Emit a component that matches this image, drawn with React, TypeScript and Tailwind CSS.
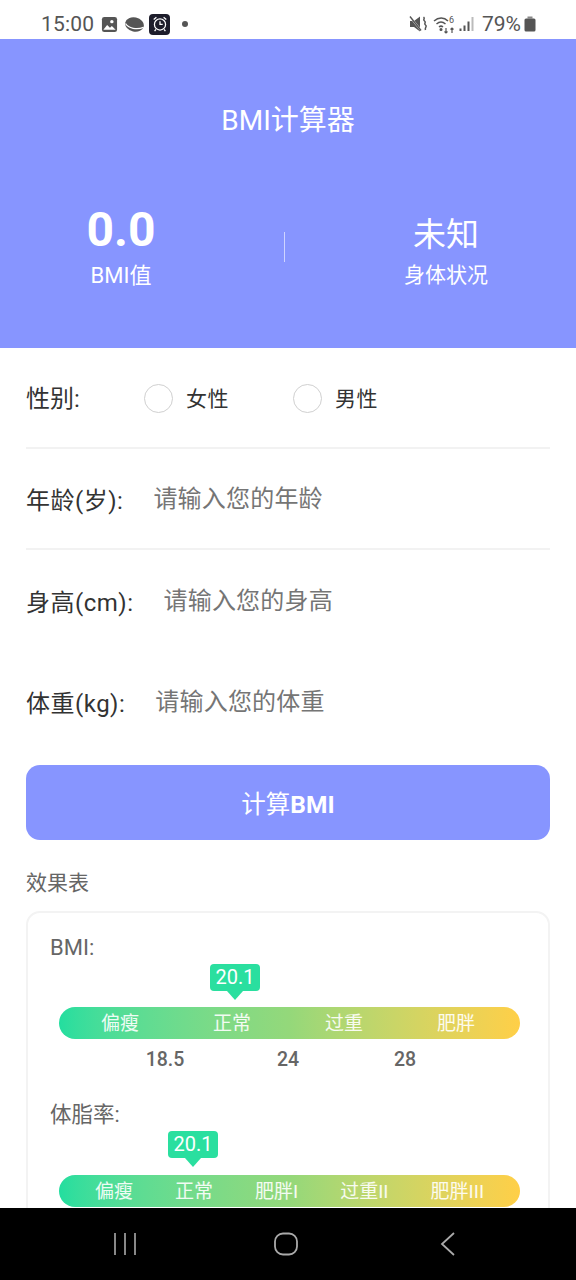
import React from 'react';

const FONT = 'font-["Roboto","Noto_Sans_CJK_SC",sans-serif]';

const StatusBar: React.FC = () => (
  <div className="h-[39px] shrink-0 bg-white flex items-center justify-between pt-[9px] pl-[41px] pr-[40px] text-[#555]">
    <div className="flex items-center">
      <span className="text-[21px] leading-none tracking-[0.2px]">15:00</span>
      <svg viewBox="0 0 18 18" className="w-[17px] h-[17px] ml-[7px]">
        <rect x="1" y="1" width="16" height="16" rx="2.5" fill="#555" />
        <circle cx="11.500" cy="6" r="1.8" fill="#fff" />
        <path d="M2.500 14.500l4-5 3 3 2-2 4 4z" fill="#fff" />
      </svg>
      <svg viewBox="0 0 22 18" className="w-[21px] h-[17px] ml-[6px]">
        <ellipse cx="11" cy="9" rx="10" ry="7.500" fill="#555" transform="rotate(12 11 9)" />
        <path d="M1.500 8c3 5 12 7 19 4" stroke="#fff" strokeWidth="1.300" fill="none" />
      </svg>
      <div className="w-[21px] h-[21px] ml-[4px] rounded-[4px] bg-[#1d1d2b] flex items-center justify-center">
        <svg viewBox="0 0 20 20" className="w-[18px] h-[18px]" fill="none" stroke="#fff" strokeWidth="1.400">
          <circle cx="10" cy="10.500" r="6.200" />
          <path d="M10 7v3.500h3M3 5l3-2.500M17 5l-3-2.500M5.500 16L4 18M14.500 16l1.500 2" />
        </svg>
      </div>
      <div className="w-[6px] h-[6px] rounded-full bg-[#555] ml-[12px]" />
    </div>
    <div className="flex items-center">
      <svg viewBox="0 0 18 18" className="w-[18px] h-[18px]" fill="#555">
        <path d="M1 6h4L11 1.500v15L5 12H1z" />
        <path d="M0.500 1l12 15" stroke="#fff" strokeWidth="2" />
        <path d="M1 1.500l11 14" stroke="#555" strokeWidth="1.400" />
        <path d="M14.500 2c2 1.500-1 2.500 1 4s-1 2.500 1 4-1 2.500 0 5" stroke="#555" strokeWidth="1.500" fill="none" />
      </svg>
      <svg viewBox="0 0 24 20" className="w-[24px] h-[20px] ml-[6px]" fill="none" stroke="#555" strokeWidth="1.500">
        <path d="M1 7c4.500-4 10-4 14 0M3.500 10c3-2.600 6-2.600 9 0M6 13c1.500-1.300 2.500-1.300 4 0" />
        <circle cx="8" cy="15.500" r="0.800" fill="#555" />
        <path d="M13 14v5M11.500 17.500l1.500 1.500 1.500-1.500M19 19v-5M17.500 15.500l1.500-1.500 1.500 1.500" strokeWidth="1.200" />
        <text x="16" y="9" fontSize="9" fill="#555" stroke="none">6</text>
      </svg>
      <svg viewBox="0 0 16 16" className="w-[16px] h-[16px] ml-[2px]" fill="#555">
        <rect x="0.500" y="12.500" width="2" height="2.500" />
        <rect x="4.500" y="9.500" width="2" height="5.500" />
        <rect x="8.500" y="5.500" width="2" height="9.500" />
        <rect x="12.500" y="1" width="2" height="14" fill="#bbb" />
      </svg>
      <span className="text-[21px] leading-none ml-[7px]">79%</span>
      <svg viewBox="0 0 12 16" className="w-[12px] h-[16px] ml-[3px]" fill="#555">
        <rect x="3.500" y="0.500" width="5" height="2" fill="#888" />
        <rect x="0.500" y="2.500" width="11" height="13" rx="1.500" />
      </svg>
    </div>
  </div>
);

const Row: React.FC<{ label: string; placeholder: string; border?: boolean }> = ({ label, placeholder, border }) => (
  <div className={`h-[101px] flex items-center ${border ? 'border-b-2 border-[#f2f2f2]' : ''}`}>
    <span className="text-[24px] text-[#333] mt-[5px] tracking-[0.5px]">{label}</span>
    <span className="text-[24px] text-[#757575] tracking-[0.2px] ml-[30px]">{placeholder}</span>
  </div>
);

const Radio: React.FC<{ label: string }> = ({ label }) => (
  <div className="flex items-center">
    <div className="w-[29px] h-[29px] rounded-full border border-[#d0d0d0]" />
    <span className="ml-[13px] text-[21px] text-[#333] tracking-[0.5px] mt-[2px]">{label}</span>
  </div>
);

const Marker: React.FC<{ ml: string }> = ({ ml }) => (
  <div className={`w-[50px] flex flex-col items-center ${ml}`}>
    <div className="w-[50px] h-[27px] rounded-[4px] bg-[#2adf9f] text-white text-[20px] leading-[27px] text-center">20.1</div>
    <div className="w-0 h-0 border-x-[8px] border-x-transparent border-t-[9px] border-t-[#2adf9f]" />
  </div>
);

const Bar: React.FC<{ labels: string[]; cls: string }> = ({ labels, cls }) => (
  <div className={`ml-[9px] w-[461px] h-[32px] shrink-0 rounded-full bg-gradient-to-r from-[#22de9f] via-[#94d87a] via-50% to-[#ffcf47] flex items-center text-white/90 text-[19px] ${cls}`}>
    {labels.map((l) => (
      <span key={l} className="mt-[2px]">{l}</span>
    ))}
  </div>
);

export default function App() {
  return (
    <div className={`w-[576px] h-[1280px] flex flex-col overflow-hidden bg-white ${FONT}`}>
      <StatusBar />
      <div className="flex-1 min-h-0 overflow-hidden">
        <div className="h-[309px] bg-[#8795ff] flex flex-col items-center">
          <div className="mt-[62px] text-[28px] leading-[40px] text-white">BMI计算器</div>
          <div className="mt-[61px] w-full flex items-center text-white">
            <div className="w-[242px] flex flex-col items-center">
              <div className="text-[48px] leading-[56px] font-bold">0.0</div>
              <div className="text-[22px] leading-[30px] mt-[3px]">BMI值</div>
            </div>
            <div className="ml-[42px] w-px h-[30px] bg-white/60" />
            <div className="ml-[41px] w-[240px] flex flex-col items-center">
              <div className="text-[33px] leading-[56px] mt-[2px]">未知</div>
              <div className="text-[21px] leading-[28px] -mt-[2px]">身体状况</div>
            </div>
          </div>
        </div>

        <div className="px-[26px]">
          <div className="h-[101px] flex items-center border-b-2 border-[#f2f2f2]">
            <span className="text-[24px] text-[#333] w-[118px] mt-[3px]">性别:</span>
            <div className="flex items-center gap-[64px] mt-[2px]">
              <Radio label="女性" />
              <Radio label="男性" />
            </div>
          </div>
          <Row label="年龄(岁):" placeholder="请输入您的年龄" border />
          <Row label="身高(cm):" placeholder="请输入您的身高" />
          <Row label="体重(kg):" placeholder="请输入您的体重" />

          <div className="mt-[13px] h-[75px] rounded-[14px] bg-[#8795ff] flex items-center justify-center text-white text-[24.5px] pt-[6px]">
            计算<span className="font-bold">BMI</span>
          </div>

          <div className="mt-[29px] text-[21px] leading-[28px] text-[#666]">效果表</div>

          <div className="mt-[14px] h-[400px] rounded-[14px] border-2 border-[#f3f3f3] px-[22px] pt-[23px]">
            <div className="text-[22px] leading-[24px] text-[#666]">BMI:</div>
            <Marker ml="ml-[160px] mt-[4px]" />
            <div className="mt-[7px]">
              <Bar labels={['偏瘦', '正常', '过重', '肥胖']} cls="pl-[42px] gap-[74px]" />
            </div>
            <div className="mt-[9px] ml-[9px] w-[461px] h-[24px] flex text-[19.5px] leading-[24px] text-[#666] font-medium">
              <span className="ml-[56px] w-[100px] text-center">18.5</span>
              <span className="w-[146px] text-center">24</span>
              <span className="w-[88px] text-center">28</span>
            </div>
            <div className="mt-[31px] text-[21.5px] leading-[24px] text-[#666]">体脂率:</div>
            <Marker ml="ml-[118px] mt-[4px]" />
            <div className="mt-[8px]">
              <Bar labels={['偏瘦', '正常', '肥胖I', '过重II', '肥胖III']} cls="pl-[36px] gap-[42px]" />
            </div>
          </div>
        </div>
      </div>

      <div className="h-[72px] shrink-0 bg-black flex items-center pl-[113px]">
        <svg viewBox="0 0 24 24" className="w-[24px] h-[24px]" fill="none" stroke="#aaa" strokeWidth="1.600">
          <path d="M2 1v22M12 1v22M22 1v22" />
        </svg>
        <svg viewBox="0 0 24 24" className="w-[24px] h-[24px] ml-[137px]" fill="none" stroke="#aaa" strokeWidth="1.800">
          <rect x="1" y="1.500" width="22" height="21" rx="8" />
        </svg>
        <svg viewBox="0 0 16 24" className="w-[16px] h-[24px] ml-[142px]" fill="none" stroke="#aaa" strokeWidth="1.800">
          <path d="M14 1L2 12l12 11" />
        </svg>
      </div>
    </div>
  );
}
